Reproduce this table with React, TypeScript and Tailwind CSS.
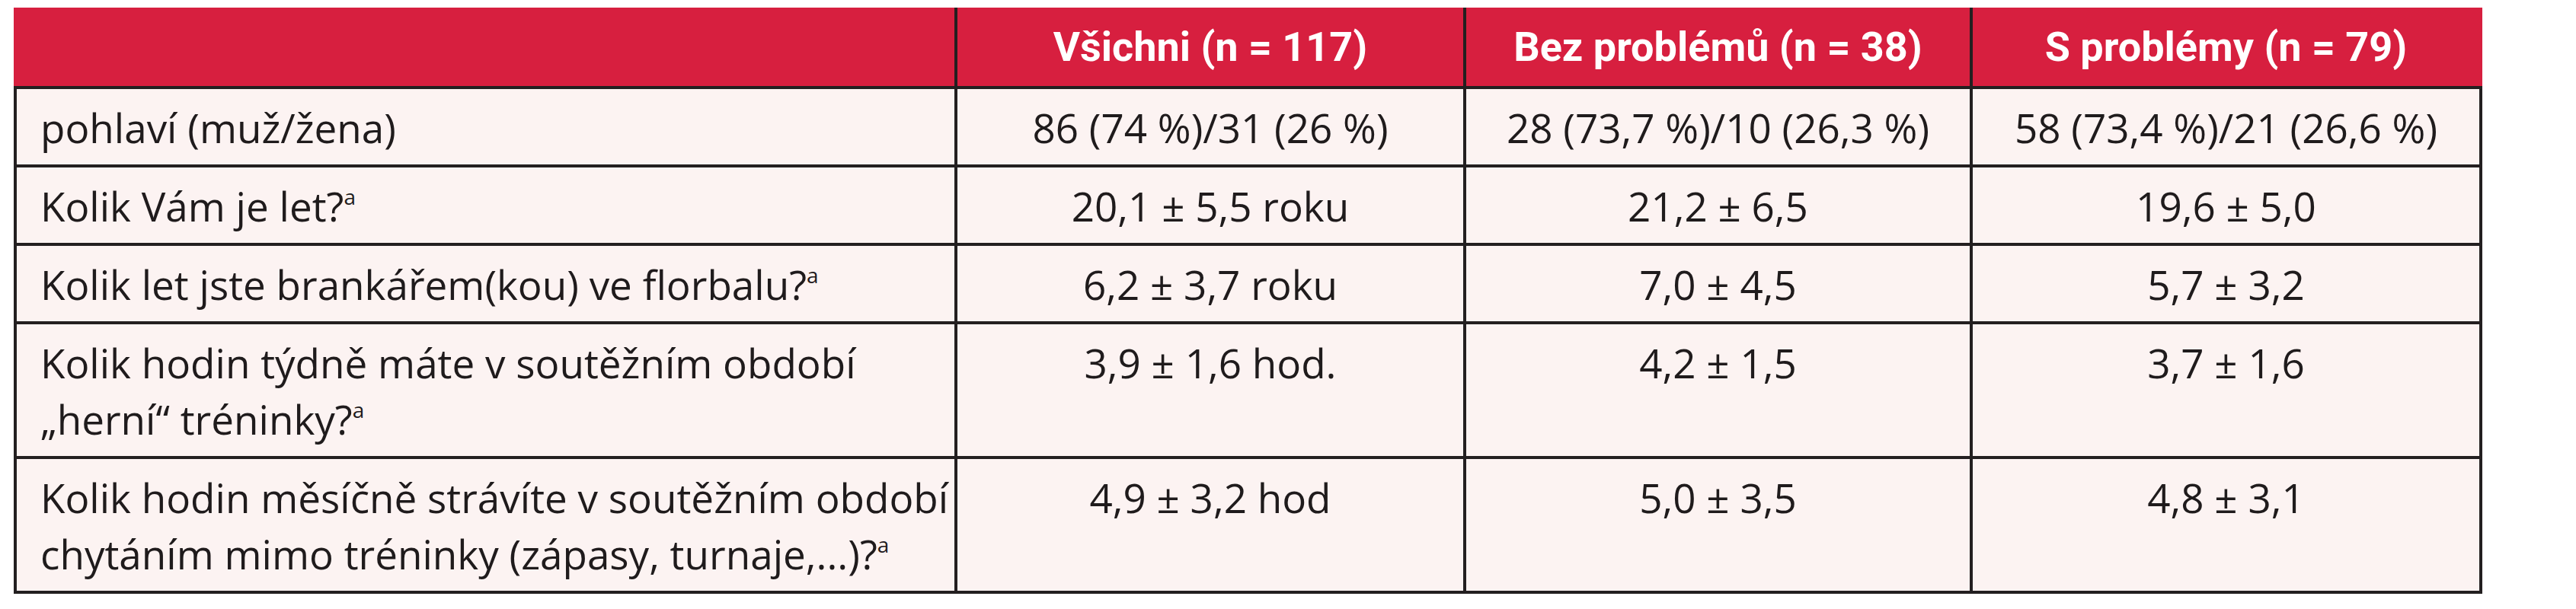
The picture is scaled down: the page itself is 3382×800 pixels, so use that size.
import React from 'react';

type Row = { label: React.ReactNode; values: string[]; tall?: boolean };

const Sup = () => <sup className="text-[28px] top-[-0.8em]">a</sup>;

const rows: Row[] = [
  { label: 'pohlaví (muž/žena)', values: ['86 (74 %)/31 (26 %)', '28 (73,7 %)/10 (26,3 %)', '58 (73,4 %)/21 (26,6 %)'] },
  { label: <>Kolik Vám je let?<Sup /></>, values: ['20,1 ± 5,5 roku', '21,2 ± 6,5', '19,6 ± 5,0'] },
  { label: <>Kolik let jste brankářem(kou) ve florbalu?<Sup /></>, values: ['6,2 ± 3,7 roku', '7,0 ± 4,5', '5,7 ± 3,2'] },
  {
    label: <>Kolik hodin týdně máte v soutěžním období<br />„herní“ tréninky?<Sup /></>,
    values: ['3,9 ± 1,6 hod.', '4,2 ± 1,5', '3,7 ± 1,6'],
    tall: true,
  },
  {
    label: <>Kolik hodin měsíčně strávíte v soutěžním období<br />chytáním mimo tréninky (zápasy, turnaje,...)?<Sup /></>,
    values: ['4,9 ± 3,2 hod', '5,0 ± 3,5', '4,8 ± 3,1'],
    tall: true,
  },
];

const headers = ['Všichni (n = 117)', 'Bez problémů (n = 38)', 'S problémy (n = 79)'];

export default function App() {
  return (
    <div className="w-[3382px] h-[800px] bg-white pt-[10px] pl-[18px]">
      <div className="grid grid-cols-[1235px_668px_665px_673px] font-['Open_Sans',sans-serif] text-[53px] text-[#1f1b1c]">
        {/* header */}
        <div className="h-[107px] bg-[#d71f3f] border-b-4 border-[#231f20]" />
        {headers.map((h, i) => (
          <div
            key={h}
            className={`h-[107px] bg-[#d71f3f] border-b-4 border-l-4 border-[#231f20] flex items-center justify-center font-['Roboto',sans-serif] font-bold text-[54px] text-white ${i === 2 ? 'pr-[4px]' : ''}`}
          >
            {h}
          </div>
        ))}

        {rows.map((r, ri) => (
          <React.Fragment key={ri}>
            <div className="bg-[#fcf3f2] border-l-4 border-b-4 border-[#231f20] pl-[31px] pr-4 pt-[14px] pb-[11px] leading-[74px] whitespace-nowrap">
              {r.label}
            </div>
            {r.values.map((v, vi) => (
              <div
                key={vi}
                className={`bg-[#fcf3f2] border-l-4 border-b-4 border-[#231f20] pt-[14px] pb-[11px] leading-[74px] text-center whitespace-nowrap ${vi === 2 ? 'border-r-4' : ''}`}
              >
                {v}
              </div>
            ))}
          </React.Fragment>
        ))}
      </div>
    </div>
  );
}
